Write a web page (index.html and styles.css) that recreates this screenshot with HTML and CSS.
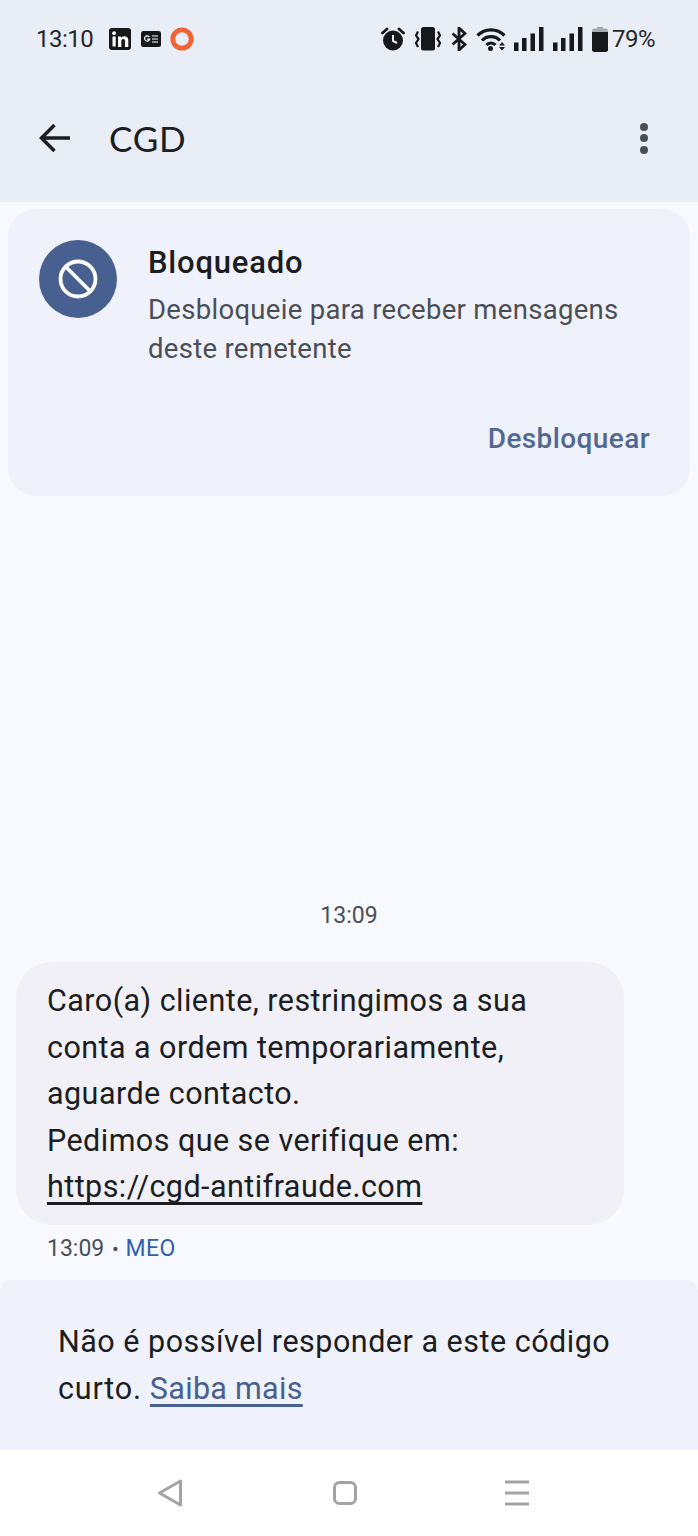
FILE: index.html
```html
<!DOCTYPE html>
<html lang="pt">
<head>
    <meta charset="utf-8">
    <title>CGD</title>
    <link rel="stylesheet" href="styles.css">
</head>
<body>
    <header class="app-header">
        <div class="status-bar">
            <span class="clock">13:10</span>
            <svg class="notif notif-in" viewBox="0 0 22 22"><rect width="22" height="22" rx="3" fill="#16181c"/><rect x="3.5" y="8.5" width="3.2" height="10" fill="#fff"/><circle cx="5.1" cy="5.2" r="1.9" fill="#fff"/><path d="M9 8.5h3v1.5c.7-1.1 1.9-1.8 3.4-1.8 2.7 0 3.9 1.7 3.9 4.4v6.4H16v-5.8c0-1.4-.5-2.3-1.7-2.3-1.3 0-2 .9-2 2.4v5.7H9z" fill="#fff"/></svg>
            <svg class="notif notif-news" viewBox="0 0 20 16"><rect width="20" height="16" rx="2.5" fill="#16181c"/><path d="M8.3 6a2.6 2.6 0 1 0 .4 2.2H6.2" fill="none" stroke="#fff" stroke-width="1.2"/><path d="M11 5h6M11 8h6M11 11h6" stroke="#fff" stroke-width="1.2"/></svg>
            <svg class="notif notif-ring" viewBox="0 0 24 24"><circle cx="12" cy="12" r="9.2" fill="none" stroke="#f26333" stroke-width="4.8"/></svg>

            <div class="status-right">
                <svg class="sys sys-alarm" viewBox="0 0 24 24"><circle cx="12" cy="13.5" r="10" fill="#16181c"/><path d="M12 8v6l4 2" fill="none" stroke="#e9edf6" stroke-width="2"/><path d="M1.5 6 6 2M22.5 6 18 2" stroke="#16181c" stroke-width="2.8" stroke-linecap="round"/></svg>
                <svg class="sys sys-vibrate" viewBox="0 0 26 24"><rect x="6" y="0" width="14" height="23.5" rx="2.5" fill="#16181c"/><path d="M3 4.500 1 8.500 3.500 12 1 16l2 4M23 4.500l2 4-2.500 3.500 2.500 4-2 4" fill="none" stroke="#16181c" stroke-width="2.2"/></svg>
                <svg class="sys sys-bt" viewBox="0 0 16 24"><path d="M1.500 6.500 14 17.500 8 23V1l6 5.500L1.500 17.500" fill="none" stroke="#16181c" stroke-width="2.8"/></svg>
                <svg class="sys sys-wifi" viewBox="0 0 30 24"><path d="M1.500 8.500a19 19 0 0 1 27 0" fill="none" stroke="#16181c" stroke-width="3.2"/><path d="M6 13.500a12.500 12.500 0 0 1 18 0" fill="none" stroke="#16181c" stroke-width="3.2"/><path d="M10.500 18a6 6 0 0 1 9 0" fill="none" stroke="#16181c" stroke-width="3"/><circle cx="14.500" cy="21.500" r="2.500" fill="#16181c"/><path d="M23 18.500l3-3.500 3 3.500zM23 20h6l-3 3.500z" fill="#16181c"/></svg>
                <svg class="sys sys-signal" viewBox="0 0 30 24"><path d="M0 15.500h4.500V24H0zM8 11h4.500v13H8zM16.500 6.500H21V24h-4.500zM25 0h4.500v24H25z" fill="#16181c"/></svg>
                <svg class="sys sys-signal" viewBox="0 0 30 24"><path d="M0 15.500h4.500V24H0zM8 11h4.500v13H8zM16.500 6.500H21V24h-4.500zM25 0h4.500v24H25z" fill="#16181c"/></svg>
                <svg class="sys sys-battery" viewBox="0 0 16 25"><path d="M5 0h6v2H5z" fill="#a9abb0"/><rect x="0" y="1.500" width="16" height="5" rx="2" fill="#a9abb0"/><path d="M0 5h16v17.500a2.500 2.500 0 0 1-2.500 2.500h-11A2.500 2.500 0 0 1 0 22.500z" fill="#16181c"/></svg>
                <span class="battery-text">79%</span>
            </div>
        </div>
        <div class="toolbar">
            <svg class="back" viewBox="0 0 32 30"><path d="M15.500 2 2.500 15l13 13M3 15h28" fill="none" stroke="#1b1d21" stroke-width="3.5"/></svg>
            <h1 class="title">CGD</h1>
            <div class="menu"><i></i><i></i><i></i></div>
        </div>
    </header>

    <main class="conversation">
        <section class="blocked-card">
            <div class="blocked-top">
                <div class="blocked-icon">
                    <svg viewBox="0 0 40 40"><circle cx="20" cy="20" r="17.5" fill="none" stroke="#fff" stroke-width="3.8"/><path d="M8 8l24 24" stroke="#fff" stroke-width="3.8"/></svg>
                </div>
                <div class="blocked-text">
                    <h2>Bloqueado</h2>
                    <p>Desbloqueie para receber mensagens deste remetente</p>
                </div>
            </div>
            <div class="blocked-action">Desbloquear</div>
        </section>

        <div class="spacer"></div>

        <div class="time-divider">13:09</div>

        <div class="bubble">
            <div>Caro(a) cliente, restringimos a sua</div>
            <div>conta a ordem temporariamente,</div>
            <div>aguarde contacto.</div>
            <div>Pedimos que se verifique em:</div>
            <div class="bubble-link">https://cgd-antifraude.com</div>
        </div>
        <div class="bubble-meta">
            <span>13:09</span>
            <span class="dot">•</span>
            <span class="sim">MEO</span>
        </div>
    </main>

    <section class="notice">
        <div>Não é possível responder a este código</div>
        <div class="notice-line">
            <span class="notice-short">curto.</span>
            <span class="notice-link">Saiba mais</span>
        </div>
    </section>

    <nav class="nav-bar">
        <svg class="nav-icon nav-back" viewBox="0 0 26 28"><path d="M23.500 2 2.500 14l21 12z" fill="none" stroke="#a3a3a5" stroke-width="3" stroke-linejoin="round"/></svg>
        <svg class="nav-icon" viewBox="0 0 26 28"><rect x="2.500" y="3.500" width="21" height="21" rx="5" fill="none" stroke="#a3a3a5" stroke-width="3"/></svg>
        <svg class="nav-icon" viewBox="0 0 26 28"><path d="M1 3h24M1 14h24M1 25h24" stroke="#a3a3a5" stroke-width="3"/></svg>
    </nav>
</body>
</html>
```

FILE: styles.css
```css
* {
    box-sizing: border-box;
}
html, body {
    margin: 0;
    padding: 0;
}
body {
    width: 698px;
    height: 1536px;
    display: flex;
    flex-direction: column;
    overflow: hidden;
    font-family: Roboto, "Noto Sans", sans-serif;
    background-color: #f8f9ff;
    color: #1b1d21;
}
h1, h2, p {
    margin: 0;
    font-weight: 400;
}

/* header */
.app-header {
    height: 202px;
    flex-shrink: 0;
    padding: 0 36px;
    background-color: #e9edf6;
}
.status-bar {
    height: 78px;
    display: flex;
    align-items: center;
    color: #25272b;
}
.clock {
    font-size: 24px;
    letter-spacing: -0.5px;
    margin-right: 16px;
}
.notif {
    display: block;
    margin-right: 10px;
}
.notif-in {
    width: 22px;
    height: 22px;
}
.notif-news {
    width: 20px;
    height: 16px;
}
.notif-ring {
    width: 24px;
    height: 24px;
    margin-left: -1px;
}
.status-right {
    margin-left: auto;
    margin-right: 7px;
    display: flex;
    align-items: center;
}
.sys {
    display: block;
    height: 24px;
    margin-right: 10px;
}
.sys-alarm {
    width: 24px;
}
.sys-vibrate {
    width: 26px;
}
.sys-bt {
    width: 16px;
    margin-right: 9px;
}
.sys-wifi {
    width: 30px;
    margin-right: 8px;
}
.sys-signal {
    width: 30px;
    margin-right: 9px;
}
.sys-battery {
    width: 16px;
    height: 25px;
    margin-right: 4px;
}
.battery-text {
    font-size: 24px;
    letter-spacing: -0.5px;
}
.toolbar {
    height: 122px;
    display: flex;
    align-items: center;
    padding-bottom: 2px;
}
.back {
    width: 32px;
    height: 30px;
    margin-left: 3px;
}
.title {
    margin-left: 38px;
    font-family: Lato, Roboto, sans-serif;
    font-size: 35px;
    letter-spacing: 0.8px;
}
.menu {
    margin-left: auto;
    margin-right: 14px;
    display: flex;
    flex-direction: column;
    gap: 3.5px;
}
.menu i {
    display: block;
    width: 8px;
    height: 8px;
    border-radius: 50%;
    background-color: #4b4e56;
}

/* conversation */
.conversation {
    flex: 1;
    display: flex;
    flex-direction: column;
    padding: 7px 8px 0;
}
.blocked-card {
    height: 287px;
    flex-shrink: 0;
    padding: 31px 40px 0 31px;
    border-radius: 28px;
    background-color: #f0f2fb;
}
.blocked-top {
    display: flex;
}
.blocked-icon {
    width: 78px;
    height: 78px;
    flex-shrink: 0;
    display: flex;
    align-items: center;
    justify-content: center;
    border-radius: 50%;
    background-color: #47608f;
}
.blocked-icon svg {
    width: 40px;
    height: 40px;
}
.blocked-text {
    margin-left: 31px;
}
.blocked-text h2 {
    font-size: 31px;
    line-height: 46px;
    font-weight: 500;
    letter-spacing: 0.8px;
}
.blocked-text p {
    margin-top: 4px;
    font-size: 27.5px;
    line-height: 39px;
    letter-spacing: 0.3px;
    color: #4b4e56;
}
.blocked-action {
    margin-top: 51px;
    text-align: right;
    font-size: 28px;
    line-height: 40px;
    font-weight: 500;
    letter-spacing: 0.4px;
    color: #536891;
}
.spacer {
    flex: 1;
}
.time-divider {
    text-align: center;
    font-size: 23px;
    line-height: 32px;
    color: #4b4e56;
    margin-bottom: 30px;
}
.bubble {
    width: 608px;
    height: 263px;
    margin-left: 8px;
    padding: 16px 0 0 31px;
    border-radius: 36px;
    background-color: #f0f0f6;
    font-size: 30.5px;
    line-height: 46.5px;
    letter-spacing: 0.45px;
}
.bubble-link {
    text-decoration: underline;
    text-decoration-thickness: 2.5px;
    text-underline-offset: 5px;
    text-decoration-skip-ink: none;
}
.bubble-meta {
    height: 55px;
    padding: 8px 0 0 39px;
    font-size: 23px;
    line-height: 32px;
    color: #4b4e56;
}
.dot {
    font-size: 20px;
    margin: 0 1px 0 2px;
}
.sim {
    color: #2f62a8;
    letter-spacing: 0.4px;
}

/* bottom */
.notice {
    height: 170px;
    flex-shrink: 0;
    padding: 38px 60px 0 58px;
    border-radius: 12px 12px 0 0;
    background-color: #f0f2fb;
    font-size: 30.5px;
    line-height: 47px;
    letter-spacing: 0.5px;
}
.notice-short {
    letter-spacing: 0.8px;
}
.notice-link {
    color: #47608f;
    letter-spacing: 0.3px;
    text-decoration: underline;
    text-decoration-thickness: 3px;
    text-underline-offset: 5px;
    text-decoration-skip-ink: none;
}
.nav-bar {
    height: 86px;
    flex-shrink: 0;
    display: flex;
    justify-content: center;
    align-items: center;
    gap: 146px;
    padding: 0 11px 1px 0;
    background-color: #fff;
}
.nav-icon {
    display: block;
    width: 26px;
    height: 28px;
}
.nav-back {
    margin-right: 3px;
}
```
